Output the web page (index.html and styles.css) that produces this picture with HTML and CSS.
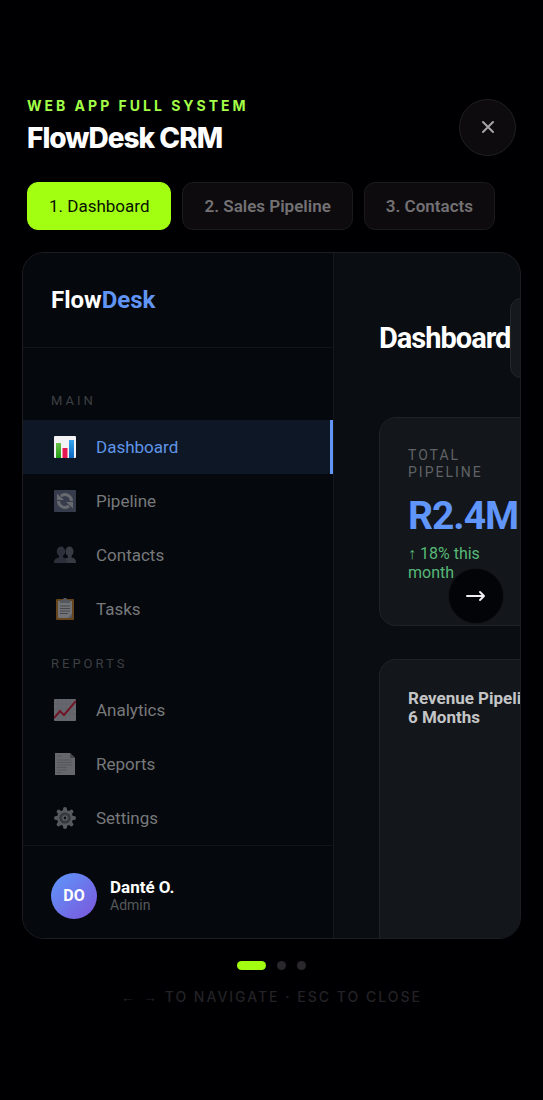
FILE: index.html
```html
<!DOCTYPE html>
<html lang="en">
  <head>
    <meta charset="UTF-8">
    <meta name="viewport" content="width=device-width, initial-scale=1">
    <title>FlowDesk CRM</title>
    <link rel="stylesheet" href="styles.css">
  </head>
  <body>
    <div class="viewer">
      <header class="viewer-header">
        <div>
          <p class="eyebrow">WEB APP FULL SYSTEM</p>
          <h1 class="title">FlowDesk CRM</h1>
        </div>
        <button class="close" type="button" aria-label="Close">
          <svg width="14" height="14" viewBox="0 0 14 14"><path d="M2 2l10 10M12 2L2 12"/></svg>
        </button>
      </header>

      <nav class="tabs">
        <button class="tab active" type="button">1. Dashboard</button>
        <button class="tab" type="button">2. Sales Pipeline</button>
        <button class="tab" type="button">3. Contacts</button>
      </nav>

      <div class="stage">
        <div class="screen">
          <aside class="sidebar">
            <div class="logo">Flow<span>Desk</span></div>
            <nav class="menu">
              <h2 class="menu-label">MAIN</h2>
              <a class="item active" href="#dashboard">
                <svg class="icon" viewBox="0 0 22 22">
                  <defs>
                    <linearGradient id="green" x2="0" y2="1"><stop stop-color="#6cc04a"/><stop offset="1" stop-color="#1f9d12"/></linearGradient>
                    <linearGradient id="blue" x2="0" y2="1"><stop stop-color="#35a5ee"/><stop offset="1" stop-color="#0b67c4"/></linearGradient>
                  </defs>
                  <rect width="22" height="22" rx="1" fill="#f3f3f5"/>
                  <rect x="2" y="7" width="5" height="15" fill="url(#green)"/>
                  <rect x="8.500" y="12" width="5" height="10" fill="#e5174f"/>
                  <rect x="15" y="4" width="5" height="18" fill="url(#blue)"/>
                </svg>
                Dashboard
              </a>
              <a class="item" href="#pipeline">
                <svg class="icon" viewBox="0 0 22 22">
                  <rect width="22" height="22" rx="1" fill="#68708b"/>
                  <g fill="none" stroke="#c9ccd2" stroke-width="3">
                    <path d="M17.500 11A6.500 6.500 0 0 0 7 6"/>
                    <path d="M4.500 11A6.500 6.500 0 0 0 15 16"/>
                  </g>
                  <path d="M3 3.500V10h7zM19 18.500V12h-7z" fill="#c9ccd2"/>
                </svg>
                Pipeline
              </a>
              <a class="item" href="#contacts">
                <svg class="icon" viewBox="0 0 22 22">
                  <g fill="#6c6c7c">
                    <ellipse cx="15.500" cy="7.500" rx="4" ry="5"/>
                    <path d="M10 19c0-4 1.500-5 4-5.500v-3h3.500v3c3 .5 4.500 1.500 4.500 5.500z"/>
                  </g>
                  <g fill="#565668">
                    <ellipse cx="7" cy="7.500" rx="4.200" ry="5"/>
                    <path d="M0 19c0-4 2-5 5-5.500v-3h4v3c2.500.5 4 1.500 4 5.500z"/>
                  </g>
                </svg>
                Contacts
              </a>
              <a class="item" href="#tasks">
                <svg class="icon" viewBox="0 0 22 22">
                  <rect x="2" y="1" width="18" height="21" rx="1" fill="#c9822c"/>
                  <path d="M4 3h14v17H4z" fill="#dedee2"/>
                  <path d="M6 5V2h3c0-3 4-3 4 0h3v3z" fill="#a3a7ae"/>
                  <path d="M6 8h10M6 10.500h10M6 13h10M6 15.500h8" stroke="#85858b"/>
                  <path d="M14 20l4-4v4z" fill="#a8a8ae"/>
                </svg>
                Tasks
              </a>
              <h2 class="menu-label">REPORTS</h2>
              <a class="item" href="#analytics">
                <svg class="icon" viewBox="0 0 22 22">
                  <rect width="22" height="22" rx="1" fill="#c7c7cf"/>
                  <path d="M4 0v22M8 0v22M12 0v22M16 0v22M0 5h22M0 10h22M0 15h22" stroke="#b3b3bc" stroke-width=".5"/>
                  <path d="M0 19l6-7 4 4L22 2" fill="none" stroke="#d92343" stroke-width="2"/>
                </svg>
                Analytics
              </a>
              <a class="item" href="#reports">
                <svg class="icon" viewBox="0 0 22 22">
                  <path d="M1 0h15l5 5v18H1z" fill="#c5c5cb"/>
                  <path d="M16 0v5h5z" fill="#88888f"/>
                  <path d="M3 3h5M3 7h15M3 9.500h15M3 12h15M3 14.500h10M3 17h10M3 19.500h5" stroke="#a4a4ab"/>
                </svg>
                Reports
              </a>
              <a class="item" href="#settings">
                <svg class="icon" viewBox="0 0 22 22">
                  <g stroke="#a6aaae" stroke-width="4" stroke-linecap="round">
                    <path d="M11 2v18M2 11h18M4.600 4.600l12.800 12.800M17.400 4.600L4.600 17.400"/>
                  </g>
                  <circle cx="11" cy="11" r="8" fill="#a6aaae"/>
                  <circle cx="11" cy="11" r="4.800" fill="#777c82" stroke="#5b6066" stroke-width="1.500"/>
                  <circle cx="11" cy="11" r="2.500" fill="#c1c4c8"/>
                  <circle cx="11" cy="11" r="1.400" fill="#15191f"/>
                </svg>
                Settings
              </a>
            </nav>
            <div class="user">
              <span class="avatar">DO</span>
              <div>
                <div class="user-name">Danté O.</div>
                <div class="user-role">Admin</div>
              </div>
            </div>
          </aside>

          <main class="main">
            <div class="main-header">
              <h2 class="main-title">Dashboard</h2>
              <button class="action" type="button" aria-label="New deal"></button>
            </div>
            <section class="card kpi">
              <h3 class="kpi-label">TOTAL PIPELINE</h3>
              <div class="kpi-value">R2.4M</div>
              <div class="kpi-change">↑ 18% this month</div>
            </section>
            <section class="card chart">
              <h3 class="chart-title">Revenue Pipeline 6&nbsp;Months</h3>
            </section>
          </main>
        </div>
        <button class="next" type="button" aria-label="Next">
          <svg width="20" height="14" viewBox="0 0 20 14"><path d="M1 7h17M14 3l4 4-4 4"/></svg>
        </button>
      </div>

      <div class="dots">
        <span class="dot active"></span>
        <span class="dot"></span>
        <span class="dot"></span>
      </div>
      <p class="hint"><span class="keys">← →</span> TO NAVIGATE · ESC TO CLOSE</p>
    </div>
  </body>
</html>
```

FILE: styles.css
```css
* {
  box-sizing: border-box;
  margin: 0;
  padding: 0;
}
body {
  background: #000002;
  color: #fff;
  font-family: Roboto, sans-serif;
}
button {
  font: inherit;
  color: inherit;
  cursor: pointer;
}
a {
  color: inherit;
  text-decoration: none;
}
svg {
  display: block;
}
.viewer {
  min-height: 100vh;
  padding: 4px 22px 0;
  display: flex;
  flex-direction: column;
  justify-content: center;
}

/* header */
.viewer-header {
  display: flex;
  justify-content: space-between;
  align-items: center;
  padding: 0 5px;
  margin-bottom: 26px;
}
.eyebrow {
  font: 700 14px/16px Inter, sans-serif;
  letter-spacing: 3px;
  color: #a3ff47;
}
.title {
  font: 800 28px/36px Inter, sans-serif;
  letter-spacing: -1px;
  margin-top: 6px;
}
.close {
  width: 57px;
  height: 57px;
  border-radius: 50%;
  background: #0d0b0e;
  border: 1px solid #201f22;
  display: grid;
  place-items: center;
}
.close svg {
  fill: none;
  stroke: #a5a4a6;
  stroke-width: 2;
  stroke-linecap: round;
}

/* tabs */
.tabs {
  display: flex;
  gap: 11px;
  padding: 0 5px;
  margin-bottom: 22px;
}
.tab {
  height: 48px;
  padding: 0 21px;
  border: 1px solid #1a191c;
  border-radius: 11px;
  background: #0d0b0e;
  color: #737174;
  font-size: 17px;
  font-weight: 600;
  white-space: nowrap;
}
.tab.active {
  background: #a3ff12;
  border-color: #a3ff12;
  color: #081000;
  font-weight: 400;
}

/* framed app */
.stage {
  position: relative;
}
.screen {
  display: flex;
  overflow: hidden;
  border: 1px solid #1e1c20;
  border-radius: 22px;
  background: #0a0d12;
}
.sidebar {
  flex: 0 0 311px;
  border-right: 1px solid #14171b;
  background: #05080c;
}
.logo {
  height: 95px;
  padding: 0 28px;
  border-bottom: 1px solid #121518;
  font-size: 24px;
  font-weight: 700;
  line-height: 94px;
}
.logo span {
  color: #6095f5;
}
.menu {
  padding-top: 25px;
}
.menu-label {
  padding: 20px 28px 11px;
  font-size: 13px;
  font-weight: 400;
  line-height: 16px;
  letter-spacing: 3px;
  color: #3d4044;
}
.item {
  height: 54px;
  padding: 0 31px;
  display: flex;
  align-items: center;
  gap: 20px;
  font-size: 17px;
  color: #77797b;
}
.icon {
  width: 22px;
  height: 22px;
  opacity: .5;
}
.item.active {
  background: #0d1725;
  border-right: 3px solid #6095f5;
  color: #6095e8;
}
.item.active .icon {
  opacity: 1;
}
.user {
  height: 93px;
  padding: 8px 28px 0;
  border-top: 1px solid #121518;
  display: flex;
  align-items: center;
  gap: 13px;
}
.avatar {
  width: 46px;
  height: 46px;
  border-radius: 50%;
  background: linear-gradient(135deg, #5c98fa, #7d55dc);
  font-size: 16px;
  font-weight: 700;
  line-height: 46px;
  text-align: center;
}
.user-name {
  font-size: 17px;
  font-weight: 700;
  line-height: 19px;
}
.user-role {
  font-size: 14px;
  line-height: 17px;
  color: #55585b;
}

/* dashboard */
.main {
  flex: 1;
  min-width: 0;
  padding: 45px 45px 0;
  display: flex;
  flex-direction: column;
}
.main-header {
  display: flex;
  align-items: center;
  margin-bottom: 39px;
}
.main-title {
  font-size: 29px;
  font-weight: 700;
  letter-spacing: -1px;
}
.action {
  flex: 0 0 120px;
  height: 80px;
  border: 1px solid #24272b;
  border-radius: 11px;
  background: #15181c;
}
.card {
  padding: 29px 28px;
  border: 1px solid #1f2226;
  border-radius: 17px;
  background: #13161a;
}
.kpi {
  width: 168px;
  height: 209px;
  margin-bottom: 33px;
}
.kpi-label {
  font-size: 14px;
  font-weight: 400;
  line-height: 17px;
  letter-spacing: 2px;
  color: #606366;
}
.kpi-value {
  margin: 12px 0 5px;
  font-size: 39px;
  font-weight: 700;
  line-height: 46px;
  letter-spacing: -1px;
  color: #6095fa;
}
.kpi-change {
  font-size: 16px;
  line-height: 19px;
  color: #58b878;
}
.chart {
  flex: 1;
  width: 220px;
  border-bottom: 0;
  border-radius: 17px 17px 0 0;
}
.chart-title {
  font-size: 17px;
  font-weight: 700;
  line-height: 19px;
  color: #c4c5c6;
}
.next {
  position: absolute;
  right: 17px;
  top: 50%;
  transform: translateY(-50%);
  width: 56px;
  height: 56px;
  border: 1px solid #121316;
  border-radius: 50%;
  background: #030407;
  display: grid;
  place-items: center;
}
.next svg {
  fill: none;
  stroke: #f0eef2;
  stroke-width: 2;
  stroke-linecap: round;
  stroke-linejoin: round;
}

/* footer */
.dots {
  display: flex;
  justify-content: center;
  gap: 11px;
  margin-top: 22px;
}
.dot {
  width: 9px;
  height: 9px;
  border-radius: 5px;
  background: #29272b;
}
.dot.active {
  width: 29px;
  background: #a3ff12;
}
.hint {
  margin-top: 18px;
  font: 500 14px/18px Inter, sans-serif;
  letter-spacing: 2px;
  text-align: center;
  color: #232226;
}
.keys {
  font-family: "Liberation Sans", sans-serif;
  font-size: 14px;
}
```
